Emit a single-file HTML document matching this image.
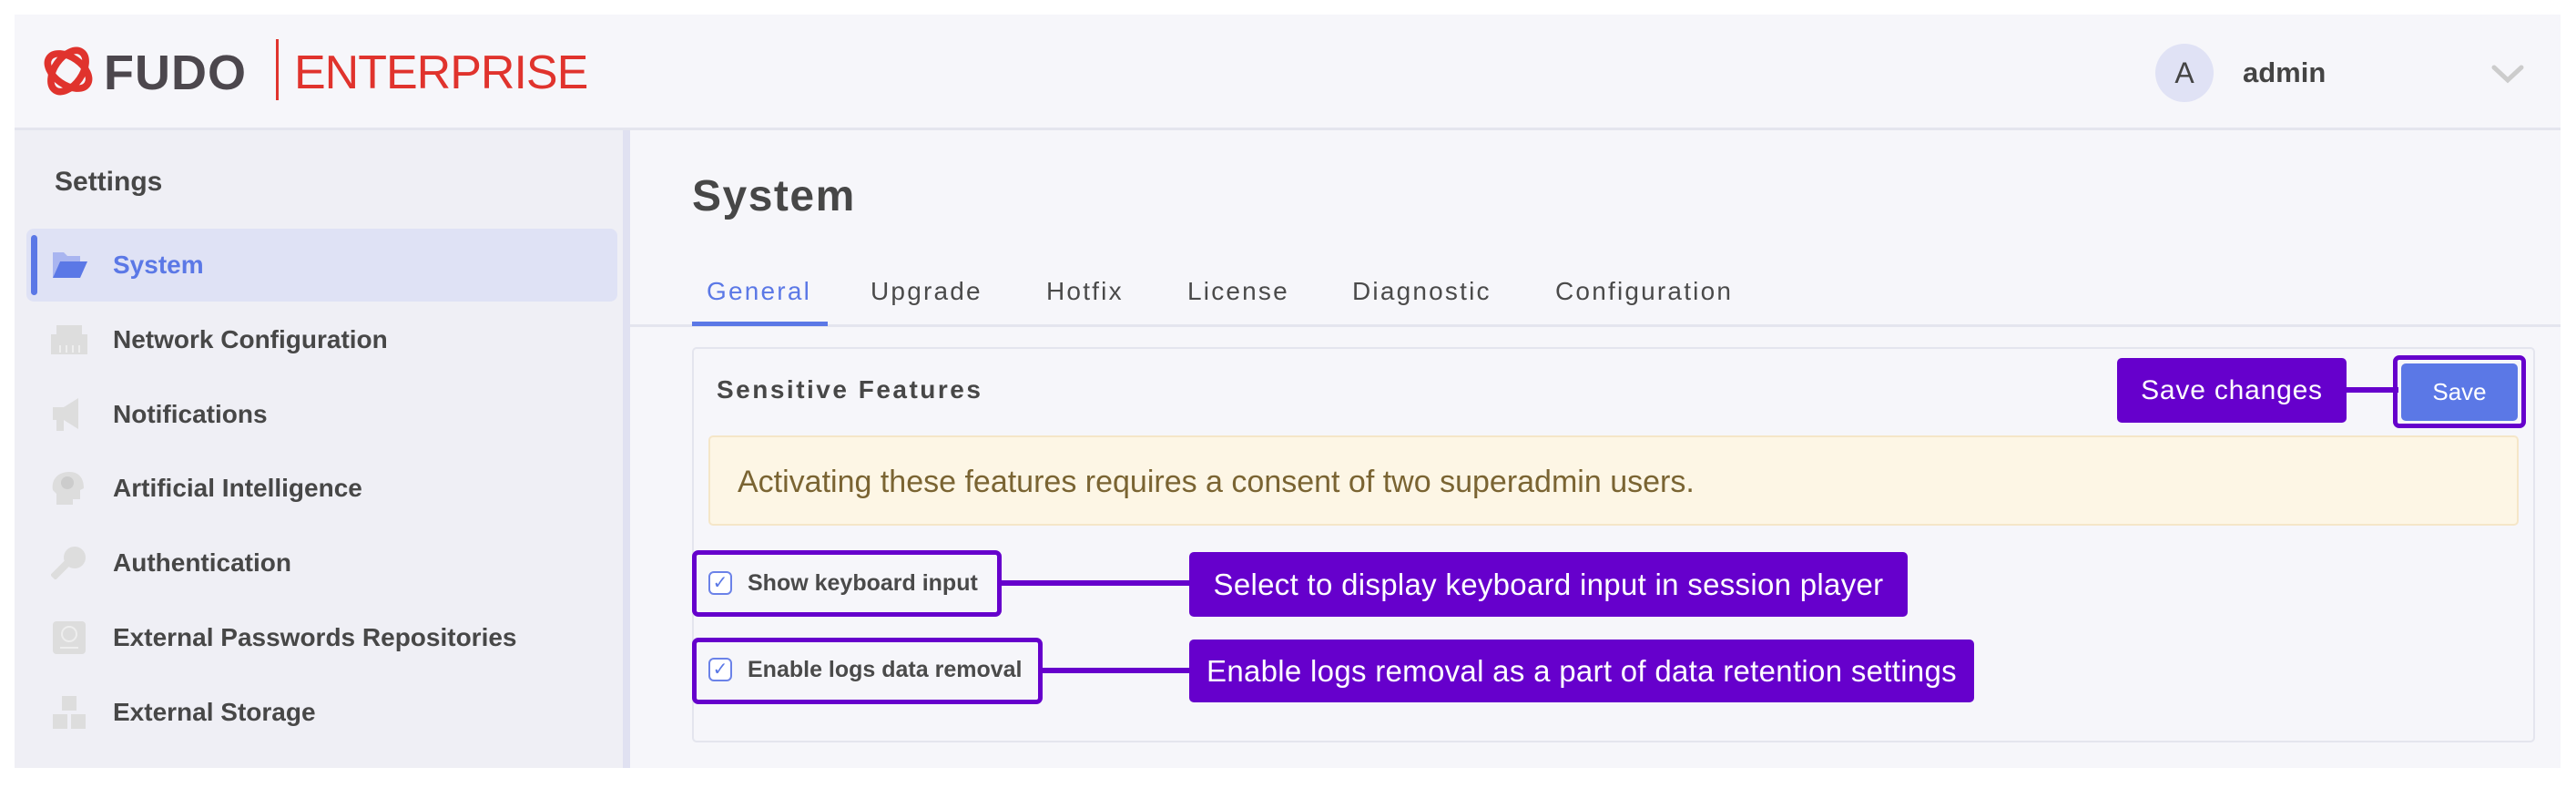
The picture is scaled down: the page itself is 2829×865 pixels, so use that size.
<!DOCTYPE html>
<html><head><meta charset="utf-8"><style>
*{margin:0;padding:0;box-sizing:border-box}
body{width:2829px;height:865px;background:#fff;position:relative;overflow:hidden;font-family:"Liberation Sans","DejaVu Sans",sans-serif;color:#464646}
.a{position:absolute}
.hdr{left:16px;top:16px;width:2796px;height:127px;background:#f6f6fa;border-bottom:3px solid #e4e5ee}
.side{left:16px;top:143px;width:676px;height:700px;background:#efeff5;border-right:8px solid #e0e1f1}
.main{left:692px;top:143px;width:2120px;height:700px;background:#f6f6fa}
.item{position:absolute;left:124px;font-size:28px;font-weight:bold;color:#474747;transform:translateY(-50%)}
.ico{position:absolute;left:56px;width:40px;height:36px;transform:translateY(-50%)}
.tab{position:absolute;top:304px;font-size:28px;letter-spacing:2.2px;color:#4a4a4a}
.lab{position:absolute;background:#6600cc;color:#fff;border-radius:5px;font-size:33px;display:flex;align-items:center;justify-content:center;letter-spacing:.3px}
.box{position:absolute;border:5px solid #6600cc;border-radius:7px}
.line{position:absolute;height:6px;background:#6600cc}
.cb{position:absolute;width:26px;height:26px;border:2px solid #6b82e8;border-radius:6px;background:#fff;color:#5b78e6;font-size:20px;line-height:22px;text-align:center;font-weight:bold}
.cbt{position:absolute;font-size:25px;font-weight:bold;color:#4a4a4a}
</style></head><body>
<div class="a hdr"></div>
<svg class="a" style="left:42px;top:44px" width="66" height="68" viewBox="0 0 70 72">
<g fill="none" stroke="#e0332d" stroke-width="8">
<ellipse cx="35" cy="36" rx="27" ry="16" transform="rotate(35 35 36)"/>
<ellipse cx="35" cy="36" rx="27" ry="16" transform="rotate(-55 35 36)"/>
</g><rect x="26" y="27" width="18" height="18" fill="#f6f6fa" transform="rotate(45 35 36)"/></svg>
<div class="a" style="left:114px;top:50px;font-size:54px;font-weight:bold;color:#4c474d;letter-spacing:1px;line-height:60px">FUDO</div>
<div class="a" style="left:303px;top:43px;width:3px;height:67px;background:#e0332d"></div>
<div class="a" style="left:323px;top:50px;font-size:52px;color:#e0332d;letter-spacing:-1px;line-height:60px">ENTERPRISE</div>
<div class="a" style="left:2367px;top:48px;width:64px;height:64px;border-radius:50%;background:#e0e2f5;color:#444;font-size:32px;text-align:center;line-height:64px">A</div>
<div class="a" style="left:2463px;top:62px;font-size:31px;font-weight:bold;color:#444">admin</div>
<svg class="a" style="left:2735px;top:70px" width="38" height="22"><path d="M4 4 L19 18 L34 4" fill="none" stroke="#ccc" stroke-width="5" stroke-linecap="round"/></svg>

<div class="a side"></div>
<div class="a main"></div>
<div class="a" style="left:60px;top:183px;font-size:30px;font-weight:bold;color:#474747">Settings</div>
<div class="a" style="left:29px;top:251px;width:649px;height:80px;background:#dfe2f5;border-radius:8px"></div>
<div class="a" style="left:34px;top:258px;width:7px;height:66px;background:#5b78e6;border-radius:4px"></div>
<svg class="ico" style="top:291px" viewBox="0 0 40 36"><path d="M2 4h12l4 4h14v6H10L2 32z" fill="#a9b5f0"/><path d="M10 14h30l-8 18H2z" fill="#5b78e6"/></svg>
<div class="item" style="top:291px;color:#5b78e6">System</div>
<svg class="ico" style="top:373px" viewBox="0 0 40 36"><rect x="6" y="2" width="28" height="32" fill="#ddd"/><rect x="0" y="12" width="40" height="22" fill="#ddd"/><path d="M10 24v8M17 24v8M24 24v8M31 24v8" stroke="#eee" stroke-width="2"/></svg>
<div class="item" style="top:373px">Network Configuration</div>
<svg class="ico" style="top:455px" viewBox="0 0 40 36"><path d="M2 10h12l16-10v34L14 24H2z" fill="#ddd"/><rect x="6" y="22" width="8" height="14" fill="#ddd"/></svg>
<div class="item" style="top:455px">Notifications</div>
<svg class="ico" style="top:536px" viewBox="0 0 40 36"><path d="M20 0C8 0 0 8 2 20l4 4v12h18v-6h8v-10l4-2C36 6 30 0 20 0z" fill="#ddd"/><circle cx="18" cy="12" r="7" fill="#ccc"/></svg>
<div class="item" style="top:536px">Artificial Intelligence</div>
<svg class="ico" style="top:618px" viewBox="0 0 40 36"><circle cx="26" cy="12" r="12" fill="#ddd"/><path d="M18 18L2 34" stroke="#ddd" stroke-width="8"/></svg>
<div class="item" style="top:618px">Authentication</div>
<svg class="ico" style="top:700px" viewBox="0 0 40 36"><rect x="2" y="0" width="36" height="36" rx="4" fill="#ddd"/><circle cx="20" cy="14" r="8" fill="none" stroke="#eee" stroke-width="2"/><rect x="10" y="28" width="20" height="2" fill="#eee"/></svg>
<div class="item" style="top:700px">External Passwords Repositories</div>
<svg class="ico" style="top:782px" viewBox="0 0 40 36"><rect x="12" y="0" width="16" height="16" fill="#ddd"/><rect x="2" y="20" width="16" height="16" fill="#ddd"/><rect x="22" y="20" width="16" height="16" fill="#ddd"/></svg>
<div class="item" style="top:782px">External Storage</div>

<div class="a" style="left:760px;top:188px;font-size:48px;font-weight:bold;color:#474747;letter-spacing:1.5px">System</div>
<div class="tab" style="left:776px;color:#5b78e6">General</div>
<div class="tab" style="left:956px">Upgrade</div>
<div class="tab" style="left:1149px">Hotfix</div>
<div class="tab" style="left:1304px">License</div>
<div class="tab" style="left:1485px">Diagnostic</div>
<div class="tab" style="left:1708px">Configuration</div>
<div class="a" style="left:692px;top:356px;width:2120px;height:3px;background:#e4e5ee"></div>
<div class="a" style="left:760px;top:353px;width:149px;height:5px;background:#5b78e6"></div>

<div class="a" style="left:760px;top:381px;width:2024px;height:434px;border:2px solid #e4e5ee;border-radius:5px;background:#f6f6fa"></div>
<div class="a" style="left:787px;top:412px;font-size:28px;font-weight:bold;color:#474747;letter-spacing:2.5px">Sensitive Features</div>
<div class="line" style="left:2570px;top:425px;width:64px"></div>
<div class="lab" style="left:2325px;top:393px;width:252px;height:71px;font-size:30px;letter-spacing:.8px">Save changes</div>
<div class="box" style="left:2628px;top:390px;width:146px;height:80px"></div>
<div class="a" style="left:2637px;top:399px;width:128px;height:63px;background:#5b78e6;border-radius:5px;color:#fff;font-size:26px;text-align:center;line-height:63px">Save</div>
<div class="a" style="left:778px;top:478px;width:1988px;height:99px;background:#fdf6e5;border:2px solid #f5e6c8;border-radius:5px"></div>
<div class="a" style="left:810px;top:510px;font-size:34px;color:#7a6432">Activating these features requires a consent of two superadmin users.</div>

<div class="line" style="left:1097px;top:637px;width:212px"></div>
<div class="box" style="left:760px;top:604px;width:340px;height:73px"></div>
<div class="cb" style="left:778px;top:627px">✓</div>
<div class="cbt" style="left:821px;top:626px">Show keyboard input</div>
<div class="lab" style="left:1306px;top:606px;width:789px;height:71px">Select to display keyboard input in session player</div>

<div class="line" style="left:1142px;top:733px;width:167px"></div>
<div class="box" style="left:760px;top:700px;width:385px;height:73px"></div>
<div class="cb" style="left:778px;top:722px">✓</div>
<div class="cbt" style="left:821px;top:721px">Enable logs data removal</div>
<div class="lab" style="left:1306px;top:702px;width:862px;height:69px">Enable logs removal as a part of data retention settings</div>
</body></html>
